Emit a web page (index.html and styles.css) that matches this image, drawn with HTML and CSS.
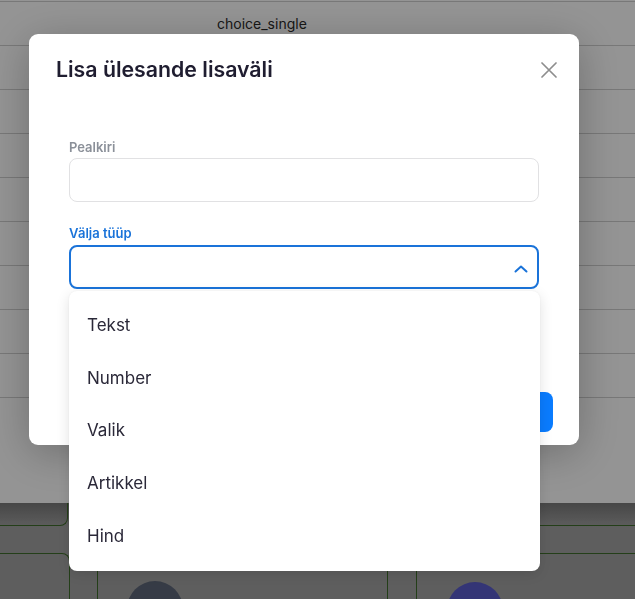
FILE: index.html
```html
<!DOCTYPE html>
<html lang="et">
<head>
<meta charset="utf-8">
<title>Lisa ülesande lisaväli</title>
<link rel="stylesheet" href="styles.css">
</head>
<body>
<div class="page">
  <div class="table">
    <div class="thead"><span class="th">choice_single</span></div>
    <div class="row"></div>
    <div class="row"></div>
    <div class="row"></div>
    <div class="row"></div>
    <div class="row"></div>
    <div class="row"></div>
    <div class="row"></div>
    <div class="row"></div>
  </div>
  <div class="board">
    <div class="board-top">
      <div class="stub-a"></div>
      <div class="stub-b"></div>
    </div>
    <div class="board-cards">
      <div class="card-a"></div>
      <div class="card-b"><div class="avatar slate"></div></div>
      <div class="card-c"><div class="avatar indigo"></div></div>
    </div>
  </div>
</div>

<div class="overlay">
  <div class="modal">
    <div class="modal-head">
      <h2 class="modal-title">Lisa ülesande lisaväli</h2>
      <button class="close" aria-label="Sulge">
        <svg width="16" height="16" viewBox="0 0 16 16"><path d="M1 1L15 15M15 1L1 15" stroke="#8e8e8e" stroke-width="1.7" stroke-linecap="round"/></svg>
      </button>
    </div>
    <div class="modal-body">
      <label class="label">Pealkiri</label>
      <div class="input"></div>
      <label class="label label-active">Välja tüüp</label>
      <div class="select-wrap">
        <div class="select">
          <svg class="chev" width="14" height="8" viewBox="0 0 14 8"><path d="M1.5 6.5L7 1.5L12.5 6.5" fill="none" stroke="#1a73d9" stroke-width="2" stroke-linecap="round" stroke-linejoin="round"/></svg>
        </div>
        <ul class="menu">
          <li class="item">Tekst</li>
          <li class="item">Number</li>
          <li class="item">Valik</li>
          <li class="item">Artikkel</li>
          <li class="item">Hind</li>
        </ul>
      </div>
    </div>
    <div class="modal-foot">
      <button class="btn">Salvesta</button>
    </div>
  </div>
</div>
</body>
</html>
```

FILE: styles.css
```css
* { box-sizing: border-box; }
html, body { margin: 0; padding: 0; }
body {
  width: 635px;
  height: 599px;
  overflow: hidden;
  font-family: Inter, "Noto Sans", sans-serif;
  background: #ffffff;
}

.page { padding-top: 1px; }
.table { border-top: 1px solid #cfcfcf; }
.thead {
  height: 44px;
  border-bottom: 1px solid #cfcfcf;
  display: flex;
  align-items: center;
  padding-left: 217px;
}
.th { font-size: 14px; color: #2a2a2a; }
.row { height: 44px; border-bottom: 1px solid #cfcfcf; }

.board {
  margin-top: 105px;
  height: 96px;
  overflow: hidden;
  background: linear-gradient(#7a7a7a, #a2a2a2 24px);
}
.board-top { display: flex; height: 23px; }
.stub-a {
  width: 68px;
  border-bottom: 1px solid #3f6d2b;
  border-right: 1px solid #3f6d2b;
  border-bottom-right-radius: 8px;
}
.stub-b { flex: 1; margin-left: 350px; border-bottom: 1px solid #3f6d2b; }
.board-cards { display: flex; align-items: flex-start; margin-top: 27px; }
.card-a {
  width: 70px;
  height: 60px;
  border-top: 1px solid #3f6d2b;
  border-right: 1px solid #3f6d2b;
  border-top-right-radius: 8px;
}
.card-b {
  width: 291px;
  height: 60px;
  margin-left: 27px;
  border: 1px solid #3f6d2b;
  border-bottom: 0;
  border-radius: 8px 8px 0 0;
  padding: 27px 0 0 29px;
}
.card-c {
  flex: 1;
  height: 60px;
  margin-left: 28px;
  border: 1px solid #3f6d2b;
  border-right: 0;
  border-bottom: 0;
  border-top-left-radius: 8px;
  padding: 28px 0 0 30px;
}
.avatar { width: 56px; height: 56px; border-radius: 50%; }
.slate { background: #5e6779; }
.indigo { background: #5b5ccc; }

.overlay {
  position: fixed;
  inset: 0;
  background: rgba(0, 0, 0, 0.42);
  padding: 34px 0 0 29px;
}

.modal {
  width: 550px;
  height: 411px;
  background: #ffffff;
  border-radius: 9px;
  box-shadow: 0 8px 44px rgba(0, 0, 0, 0.26);
  display: flex;
  flex-direction: column;
}

.modal-head {
  display: flex;
  justify-content: space-between;
  align-items: center;
  padding: 21px 22px 0 27px;
}
.modal-title {
  margin: 0;
  font-size: 21.3px;
  line-height: 28px;
  font-weight: 600;
  color: #1f1d30;
}
.close {
  border: 0;
  background: none;
  padding: 0;
  width: 16px;
  height: 16px;
  display: flex;
  margin-top: 1px;
}

.modal-body {
  padding: 55px 40px 0 40px;
  display: flex;
  flex-direction: column;
}
.label {
  font-size: 13px;
  line-height: 18px;
  font-weight: 600;
  color: #8b9099;
  margin-bottom: 2px;
}
.label-active { color: #1a73d9; margin-bottom: 3px; }
.input {
  height: 44px;
  border: 1px solid #e1e1e3;
  border-radius: 8px;
  margin-bottom: 22px;
}
.select-wrap { position: relative; }
.select {
  height: 44px;
  border: 2px solid #1a73d9;
  border-radius: 8px;
  display: flex;
  align-items: center;
  justify-content: flex-end;
  padding: 4px 9px 0 0;
}
.chev { display: block; }

.menu {
  position: absolute;
  top: calc(100% + 2px);
  left: 0;
  width: calc(100% + 1px);
  margin: 0;
  padding: 8px 0;
  list-style: none;
  background: #ffffff;
  border-radius: 8px;
  box-shadow: 0 4px 14px rgba(0, 0, 0, 0.12), 0 0 2px rgba(0, 0, 0, 0.06);
  z-index: 2;
}
.item {
  height: 52.8px;
  display: flex;
  align-items: center;
  padding-left: 18px;
  padding-bottom: 1px;
  font-size: 17px;
  color: #2a2838;
}

.modal-foot {
  margin-top: auto;
  display: flex;
  justify-content: flex-end;
  padding: 0 26px 13px 0;
}
.btn {
  height: 40px;
  padding: 0 22px;
  border: 0;
  border-radius: 8px;
  background: #0a7cff;
  color: #ffffff;
  font-family: inherit;
  font-size: 15px;
  font-weight: 600;
}
```
